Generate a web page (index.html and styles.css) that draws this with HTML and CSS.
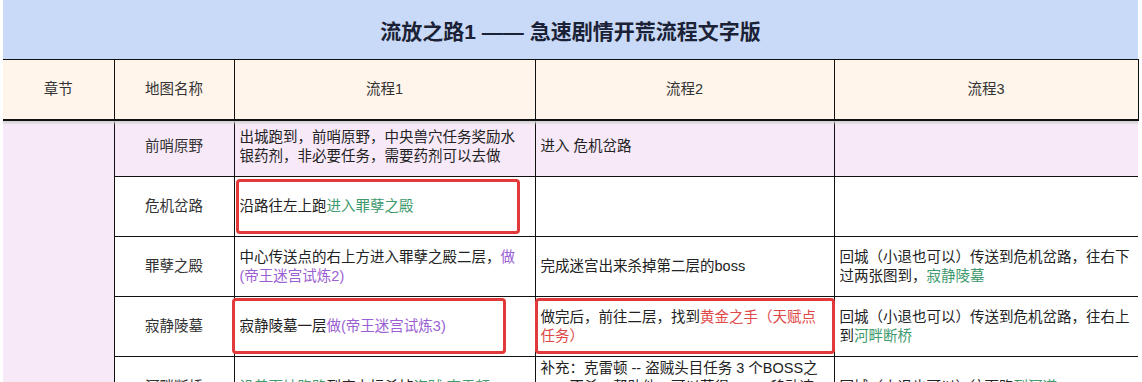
FILE: index.html
```html
<!DOCTYPE html>
<html lang="zh-CN">
<head>
<meta charset="utf-8">
<title>流放之路1 —— 急速剧情开荒流程文字版</title>
<link rel="stylesheet" href="styles.css">
</head>
<body>
<div class="sheet">
  <div class="title">流放之路1 —— 急速剧情开荒流程文字版</div>
  <table class="grid head">
    <colgroup><col class="c1"><col class="c2"><col class="c3"><col class="c4"><col class="c5"></colgroup>
    <tr>
      <td>章节</td>
      <td>地图名称</td>
      <td>流程1</td>
      <td>流程2</td>
      <td>流程3</td>
    </tr>
  </table>
  <div class="body">
    <table class="grid rows">
      <colgroup><col class="c1"><col class="c2"><col class="c3"><col class="c4"><col class="c5"></colgroup>
      <tr class="pink">
        <td class="chapter" rowspan="5"></td>
        <td class="map">前哨原野</td>
        <td>出城跑到，前哨原野，中央兽穴任务奖励水<br>银药剂，非必要任务，需要药剂可以去做</td>
        <td>进入 危机岔路</td>
        <td class="last"></td>
      </tr>
      <tr>
        <td class="map">危机岔路</td>
        <td>沿路往左上跑<span class="green">进入罪孽之殿</span></td>
        <td></td>
        <td class="last"></td>
      </tr>
      <tr>
        <td class="map">罪孽之殿</td>
        <td>中心传送点的右上方进入罪孽之殿二层，<span class="purple">做<br>(帝王迷宫试炼2)</span></td>
        <td>完成迷宫出来杀掉第二层的boss</td>
        <td class="last">回城（小退也可以）传送到危机岔路，往右下<br>过两张图到，<span class="green">寂静陵墓</span></td>
      </tr>
      <tr>
        <td class="map">寂静陵墓</td>
        <td>寂静陵墓一层<span class="purple">做(帝王迷宫试炼3)</span></td>
        <td>做完后，前往二层，找到<span class="red">黄金之手（天赋点<br>任务）</span></td>
        <td class="last">回城（小退也可以）传送到危机岔路，往右上<br>到<span class="green">河畔断桥</span></td>
      </tr>
      <tr class="tall">
        <td class="map">河畔断桥</td>
        <td><span class="green">沿着下坡跑路</span>到底上坛杀掉<span class="green">盗贼 克雷顿</span></td>
        <td>补充：克雷顿 -- 盗贼头目任务 3 个BOSS之<br>一，不杀，帮助他，可以获得 +30%移动速<br>度的奖励</td>
        <td class="last">回城（小退也可以）往下跑<span class="green">到河道</span></td>
      </tr>
    </table>
    <div class="mark m1"></div>
    <div class="mark m2"></div>
    <div class="mark m3"></div>
  </div>
</div>
</body>
</html>
```
FILE: styles.css
```css
body {
  margin: 0;
  background: #ffffff;
  font-family: "Liberation Sans", "Noto Sans CJK SC", sans-serif;
  color: #222222;
}

.sheet {
  width: 1135px;
  margin-left: 3px;
}

.title {
  height: 59px;
  background: #c9daf8;
  display: flex;
  align-items: center;
  justify-content: center;
  font-size: 21px;
  font-weight: bold;
  color: #1b2236;
}

.grid {
  width: 1135px;
  border-collapse: collapse;
  table-layout: fixed;
  font-size: 14.5px;
}

.c1 { width: 111px; }
.c2 { width: 120px; }
.c3 { width: 301px; }
.c4 { width: 299px; }
.c5 { width: 304px; }

.grid td {
  border: 1px solid #111111;
  padding: 0 5px;
  line-height: 19px;
  vertical-align: middle;
}

.head td {
  height: 59px;
  padding: 0;
  background: #fff5eb;
  text-align: center;
  color: #333333;
}

.head td:first-child {
  border-left: none;
}

.head {
  border-bottom: 2px solid #111111;
}

.body {
  position: relative;
  height: 262px;
  overflow: hidden;
}

.body::before {
  content: "";
  position: absolute;
  top: 0;
  left: 0;
  right: 0;
  height: 4px;
  background: linear-gradient(#cfcfcf, rgba(220, 220, 220, 0));
  z-index: 2;
}

.rows {
  margin-top: -5px;
}

.rows tr {
  height: 60px;
}

.rows tr.tall {
  height: 62px;
}

.rows td.chapter {
  background: #f6e9f8;
  border-left: none;
  border-top: none;
  border-bottom: none;
}

.rows tr.pink td {
  background: #f7e9f8;
}

.rows td.map {
  text-align: center;
  color: #333333;
}

.rows td.last {
  border-right: 1px solid #d6d6d6;
}

.green { color: #3f9a6e; }
.purple { color: #9b5fd3; }
.red { color: #e04848; }

.mark {
  position: absolute;
  box-sizing: border-box;
  border: 3px solid #e23a3a;
  border-radius: 4px;
  z-index: 3;
}

.m1 { left: 233px; top: 58px; width: 284px; height: 55px; }
.m2 { left: 229px; top: 177px; width: 274px; height: 56px; }
.m3 { left: 532px; top: 177px; width: 300px; height: 56px; }
```
